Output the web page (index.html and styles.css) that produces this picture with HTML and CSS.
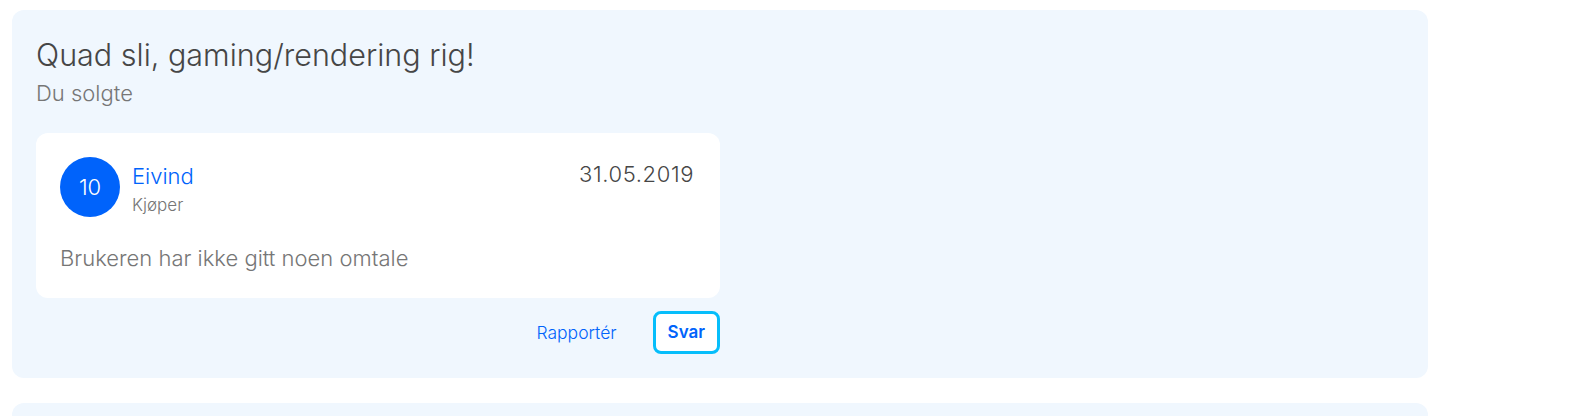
FILE: index.html
```html
<!DOCTYPE html>
<html lang="no">
<head>
  <meta charset="UTF-8" />
  <meta name="viewport" content="width=device-width, initial-scale=1" />
  <title>Omtaler</title>
  <link rel="stylesheet" href="styles.css">
</head>
<body>
  <main class="reviews">
    <section class="review-panel">
      <h2 class="ad-title">Quad sli, gaming/rendering rig!</h2>
      <p class="ad-status">Du solgte</p>
      <div class="review-card">
        <div class="review-head">
          <div class="avatar">10</div>
          <div class="who">
            <a class="name" href="#">Eivind</a>
            <span class="role">Kjøper</span>
          </div>
          <span class="date">31.05.2019</span>
        </div>
        <p class="review-text">Brukeren har ikke gitt noen omtale</p>
      </div>
      <div class="actions">
        <button class="link-btn">Rapportér</button>
        <button class="reply-btn">Svar</button>
      </div>
    </section>
    <section class="review-panel">
      <h2 class="ad-title">&nbsp;</h2>
      <p class="ad-status">&nbsp;</p>
    </section>
  </main>
</body>
</html>
```

FILE: styles.css
```css
body {
  margin: 0;
  background: #fff;
  font-family: Inter, "Noto Sans", Arial, sans-serif;
  color: #464646;
}
.reviews {
  width: 1416px;
  padding: 10px 12px;
  display: flex;
  flex-direction: column;
  gap: 25px;
}
.review-panel {
  background: #f0f7fe;
  border-radius: 12px;
  padding: 25px 24px 24px;
}
.ad-title {
  margin: 0;
  font-size: 30.5px;
  font-weight: 300;
  line-height: 40px;
  color: #464646;
}
.ad-status {
  margin: 4px 0 0;
  font-size: 22px;
  font-weight: 300;
  line-height: 28px;
  color: #767676;
}
.review-card {
  margin-top: 26px;
  width: 636px;
  background: #fff;
  border-radius: 12px;
  padding: 24px 24px 26px;
}
.review-head {
  display: flex;
  align-items: flex-start;
}
.avatar {
  width: 60px;
  height: 60px;
  border-radius: 50%;
  background: #0063fb;
  color: #fff;
  font-size: 22px;
  font-weight: 300;
  display: flex;
  align-items: center;
  justify-content: center;
  flex-shrink: 0;
}
.who {
  margin-left: 12px;
  padding-top: 5px;
  display: flex;
  flex-direction: column;
  flex: 1;
}
.name {
  color: #0063fb;
  text-decoration: none;
  font-size: 22px;
  font-weight: 300;
  line-height: 28px;
}
.role {
  margin-top: 3px;
  color: #767676;
  font-size: 17px;
  font-weight: 300;
  line-height: 24px;
}
.date {
  padding-top: 3px;
  padding-right: 2px;
  font-size: 22px;
  font-weight: 300;
  line-height: 28px;
  letter-spacing: 0.6px;
}
.review-text {
  margin: 27px 0 0;
  font-size: 22px;
  font-weight: 300;
  line-height: 28px;
  color: #767676;
}
.actions {
  width: 684px;
  margin-top: 13px;
  display: flex;
  justify-content: flex-end;
  align-items: center;
  gap: 20px;
}
.link-btn {
  background: none;
  border: none;
  padding: 8px 16px;
  font: 300 17.5px Inter, "Noto Sans", Arial, sans-serif;
  color: #0063fb;
  cursor: pointer;
}
.reply-btn {
  background: #fff;
  border: 3px solid #06befb;
  border-radius: 8px;
  padding: 8px 12px;
  font: 600 17px/21px Inter, "Noto Sans", Arial, sans-serif;
  color: #0063fb;
  cursor: pointer;
}
```
